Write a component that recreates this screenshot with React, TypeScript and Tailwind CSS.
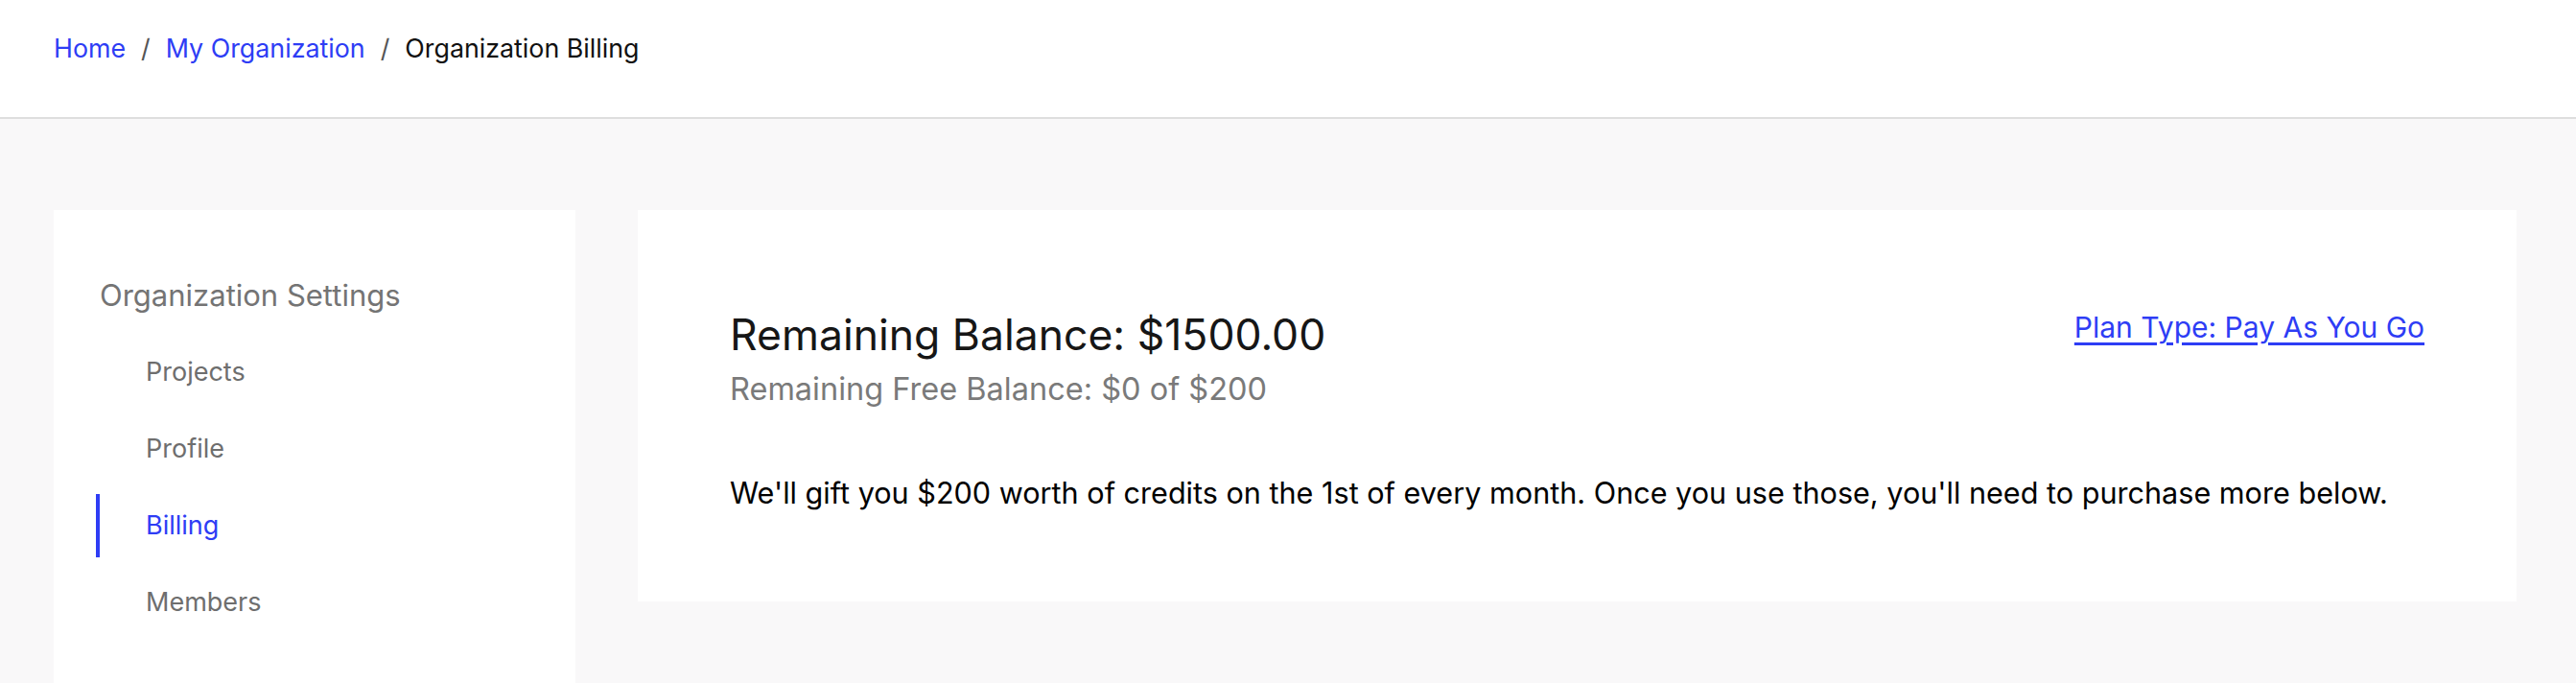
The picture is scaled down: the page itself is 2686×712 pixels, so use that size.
import React from 'react';

const navItems = ['Projects', 'Profile', 'Billing', 'Members'];

const App: React.FC = () => {
  const active = 'Billing';

  return (
    <div className="min-h-screen bg-[#f9f8f9] font-['Inter',sans-serif]">
      {/* Top bar */}
      <header className="h-[124px] bg-white border-b-2 border-[#dedede] pl-[56px] pt-[30px]">
        <nav className="flex items-center gap-[16px] text-[26.8px] leading-[40px]">
          <a href="#" className="text-[#2e3df5]">Home</a>
          <span className="text-[#555]">/</span>
          <a href="#" className="text-[#2e3df5]">My Organization</a>
          <span className="text-[#555]">/</span>
          <span className="text-[#111]">Organization Billing</span>
        </nav>
      </header>

      <main className="flex items-start gap-[65px] pl-[56px] pr-[62px] pt-[95px]">
        {/* Sidebar */}
        <aside className="w-[544px] shrink-0 bg-white pl-[44px] pt-[68px] pb-[60px]">
          <h3 className="ml-[4px] text-[31px] leading-[42px] text-[#747474]">Organization Settings</h3>
          <ul className="mt-[26px] flex flex-col gap-[14px]">
            {navItems.map((item) => (
              <li
                key={item}
                className={`h-[66px] flex items-center pl-[48px] text-[27px] border-l-4 ${
                  item === active
                    ? 'border-[#2e3df5] text-[#2e3df5]'
                    : 'border-transparent text-[#6e6e6e]'
                }`}
              >
                {item}
              </li>
            ))}
          </ul>
        </aside>

        {/* Billing card */}
        <section className="flex-1 bg-white px-[96px] pt-[104px] pb-[92px]">
          <div className="flex items-start justify-between">
            <div>
              <h1 className="text-[44.5px] leading-[52px] text-[#161616]">Remaining Balance: $1500.00</h1>
              <p className="mt-[9px] text-[32.5px] leading-[44px] text-[#7a7a7a]">
                Remaining Free Balance: $0 of $200
              </p>
            </div>
            <a href="#" className="text-[30px] leading-[36px] text-[#2e3df5] underline underline-offset-[5px]">
              Plan Type: Pay As You Go
            </a>
          </div>
          <p className="mt-[65px] text-[30.6px] leading-[42px] text-black">
            We'll gift you $200 worth of credits on the 1st of every month. Once you use those, you'll need to purchase more below.
          </p>
        </section>
      </main>
    </div>
  );
};

export default App;
